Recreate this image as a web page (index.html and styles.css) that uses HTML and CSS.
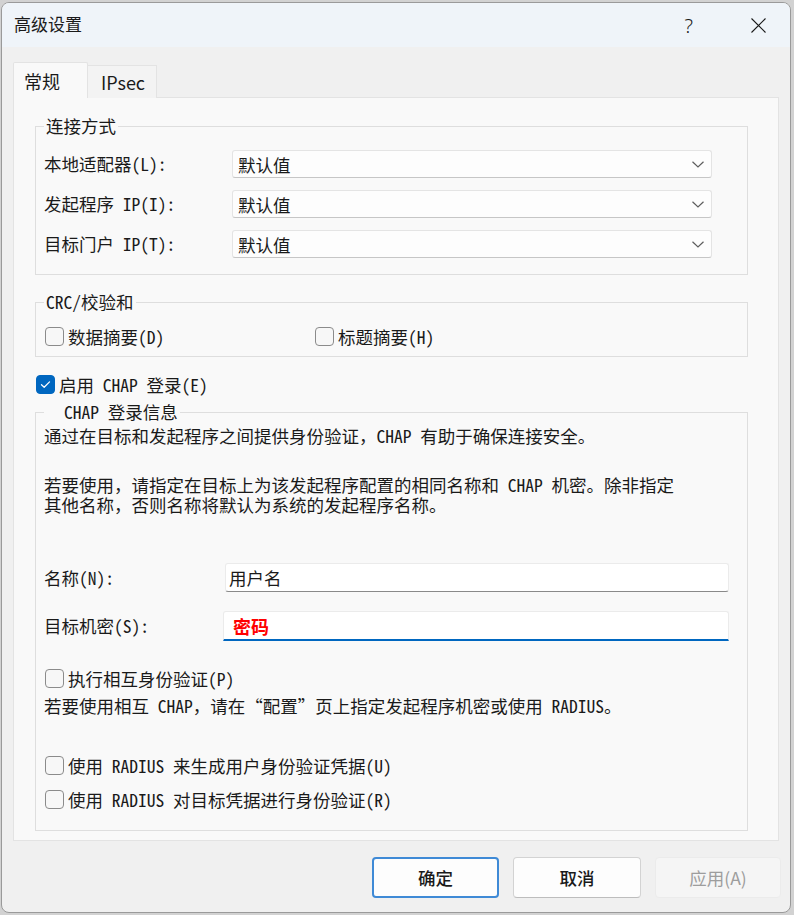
FILE: index.html
```html
<!DOCTYPE html>
<html lang="zh-CN">
  <head>
    <meta charset="UTF-8" />
    <meta name="viewport" content="width=device-width, initial-scale=1.0" />
    <title>高级设置</title>
    <link rel="stylesheet" href="styles.css">
  </head>
  <body>
    <div class="window">
      <div class="titlebar">
        <span class="title">高级设置</span>
        <span class="help">?</span>
        <svg class="close" viewBox="0 0 15 15" fill="none" stroke="#1a1a1a" stroke-width="1.1">
          <path d="M0.5 0.5L14.5 14.5M14.5 0.5L0.5 14.5"></path>
        </svg>
      </div>

      <div class="tabs">
        <div class="tab tab-active">常规</div>
        <div class="tab tab-ipsec">IPsec</div>
      </div>

      <div class="panel">
        <fieldset class="group group-conn">
          <legend>连接方式</legend>
          <div class="form-grid">
            <span class="label">本地适配器(L):</span>
            <div class="combo">
              <span>默认值</span>
              <svg class="chevron" viewBox="0 0 12 7" fill="none" stroke="#5f5f5f" stroke-width="1.2">
                <path d="M0.5 0.8L6 6L11.5 0.8"></path>
              </svg>
            </div>
            <span class="label">发起程序 IP(I):</span>
            <div class="combo">
              <span>默认值</span>
              <svg class="chevron" viewBox="0 0 12 7" fill="none" stroke="#5f5f5f" stroke-width="1.2">
                <path d="M0.5 0.8L6 6L11.5 0.8"></path>
              </svg>
            </div>
            <span class="label">目标门户 IP(T):</span>
            <div class="combo">
              <span>默认值</span>
              <svg class="chevron" viewBox="0 0 12 7" fill="none" stroke="#5f5f5f" stroke-width="1.2">
                <path d="M0.5 0.8L6 6L11.5 0.8"></path>
              </svg>
            </div>
          </div>
        </fieldset>

        <fieldset class="group group-crc">
          <legend>CRC/校验和</legend>
          <div class="check-row">
            <div class="check check-wide"><span class="box"></span>数据摘要(D)</div>
            <div class="check"><span class="box"></span>标题摘要(H)</div>
          </div>
        </fieldset>

        <div class="check check-chap">
          <span class="box box-on">
            <svg viewBox="0 0 19 19" fill="none" stroke="#ffffff" stroke-width="1.4" stroke-linecap="round" stroke-linejoin="round">
              <path d="M5 9.8L8 12.6L14 6.6"></path>
            </svg>
          </span>启用 CHAP 登录(E)
        </div>

        <fieldset class="group group-chap">
          <legend>CHAP 登录信息</legend>
          <p class="note">通过在目标和发起程序之间提供身份验证，CHAP 有助于确保连接安全。</p>
          <div class="note-tight">
            <p class="note-line">若要使用，请指定在目标上为该发起程序配置的相同名称和 CHAP 机密。除非指定</p>
            <p class="note-line">其他名称，否则名称将默认为系统的发起程序名称。</p>
          </div>

          <div class="field-row field-row-name">
            <span class="label">名称(N):</span>
            <div class="field">用户名</div>
          </div>
          <div class="field-row field-row-secret">
            <span class="label">目标机密(S):</span>
            <div class="field field-secret">密码</div>
          </div>

          <div class="check check-mutual"><span class="box"></span>执行相互身份验证(P)</div>
          <p class="note note-mutual">若要使用相互 CHAP，请在“配置”页上指定发起程序机密或使用 RADIUS。</p>

          <div class="check check-radius1"><span class="box"></span>使用 RADIUS 来生成用户身份验证凭据(U)</div>
          <div class="check check-radius2"><span class="box"></span>使用 RADIUS 对目标凭据进行身份验证(R)</div>
        </fieldset>
      </div>

      <div class="buttons">
        <div class="btn btn-default">确定</div>
        <div class="btn btn-cancel">取消</div>
        <div class="btn btn-disabled">应用(A)</div>
      </div>
    </div>
  </body>
</html>
```

FILE: styles.css
```css
body {
  margin: 0;
  background: #d2d2d2;
  font-family: "Noto Sans Mono CJK SC", "Noto Sans CJK SC", sans-serif;
  font-size: 17.5px;
  color: #1a1a1a;
}

.window {
  box-sizing: border-box;
  width: 790px;
  height: 911px;
  margin: 2px 0 0 1px;
  border: 1px solid #9a9a9a;
  border-radius: 8px;
  background: #f0f0f0;
  overflow: hidden;
}

.titlebar {
  height: 44px;
  background: #eff4f9;
  display: flex;
  align-items: center;
  padding-left: 12px;
}

.title {
  flex: 1;
  font-family: "Noto Sans CJK SC", sans-serif;
  font-size: 17px;
  line-height: 20px;
  margin-top: -2px;
}

.help {
  font-family: "Noto Sans", sans-serif;
  font-size: 20px;
  font-weight: 300;
  margin-right: 58px;
}

.close {
  width: 15px;
  height: 15px;
  margin-right: 24px;
}

/* tab strip */
.tabs {
  display: flex;
  align-items: flex-end;
  height: 36px;
  margin: 15px 0 -1px 11px;
}

.tab {
  box-sizing: border-box;
  height: 33px;
  display: flex;
  align-items: center;
  border: 1px solid #e3e3e3;
  border-bottom: none;
  background: #f3f3f3;
  font-family: "Noto Sans CJK SC", sans-serif;
  font-size: 18px;
}

.tab-active {
  position: relative;
  z-index: 1;
  width: 75px;
  height: 36px;
  padding-left: 10px;
  background: #f9f9f9;
  border-radius: 2px 2px 0 0;
}

.tab-ipsec {
  width: 69px;
  padding-left: 13px;
  border-left: none;
}

.panel {
  box-sizing: border-box;
  height: 744px;
  margin: 0 11px;
  padding: 16px 30px 0 21px;
  background: #f9f9f9;
  border: 1px solid #e3e3e3;
}

/* group boxes */
.group {
  margin: 0;
  padding: 0 0 0 8px;
  min-width: 0;
  border: 1px solid #dedede;
}

.group legend {
  padding: 0 2px;
  line-height: 24px;
}

.group-conn {
  padding-bottom: 16px;
}

.form-grid {
  display: grid;
  grid-template-columns: 188px 480px;
  row-gap: 12px;
  align-items: center;
  margin-top: 12px;
}

.label {
  line-height: 24px;
  white-space: nowrap;
}

.combo {
  box-sizing: border-box;
  height: 28px;
  display: flex;
  align-items: center;
  justify-content: space-between;
  padding: 0 7px 0 5px;
  background: #fdfdfd;
  border: 1px solid #e4e4e4;
  border-bottom-color: #c6c6c6;
  border-radius: 3px;
}

.chevron {
  width: 12px;
  height: 7px;
}

.group-crc {
  margin-top: 15px;
  padding-bottom: 8px;
}

.check-row {
  display: flex;
  margin-top: 10px;
}

.check {
  display: flex;
  align-items: center;
  gap: 4px;
  height: 24px;
  white-space: nowrap;
}

.check-wide {
  width: 270px;
}

.box {
  box-sizing: border-box;
  width: 19px;
  height: 19px;
  margin-left: 1px;
  border: 1px solid #8b8b8b;
  border-radius: 4px;
  background: #f7f7f7;
}

.box-on {
  background: #0067c0;
  border-color: #0067c0;
}

.box-on svg {
  display: block;
  width: 17px;
  height: 17px;
}

.check-chap {
  margin-top: 15px;
}

/* CHAP group */
.group-chap {
  margin-top: 4px;
  padding-bottom: 19px;
}

.group-chap legend {
  padding-left: 20px;
}

.note {
  margin: 0;
  line-height: 24px;
  white-space: nowrap;
}

.note-tight {
  margin-top: 27px;
}

.note-line {
  margin: 0;
  line-height: 20px;
  white-space: nowrap;
}

.field-row {
  display: grid;
  grid-template-columns: 181px 504px;
  align-items: center;
}

.field-row-name {
  margin-top: 48px;
}

.field-row-secret {
  margin-top: 19px;
}

.field {
  box-sizing: border-box;
  height: 29px;
  display: flex;
  align-items: center;
  padding-left: 3px;
  background: #ffffff;
  border: 1px solid #ebebeb;
  border-bottom-color: #8a8a8a;
  border-radius: 3px;
}

.field-secret {
  width: 506px;
  height: 30px;
  margin-left: -2px;
  padding-left: 9px;
  border-bottom: 2px solid #0067c0;
  border-radius: 3px 3px 0 0;
  color: #ff0000;
  font-family: "Noto Sans CJK SC", sans-serif;
  font-weight: 700;
  font-size: 18px;
}

.check-mutual {
  margin-top: 25px;
}

.note-mutual {
  margin-top: 4px;
}

.check-radius1 {
  margin-top: 35px;
}

.check-radius2 {
  margin-top: 10px;
}

/* dialog buttons */
.buttons {
  display: flex;
  justify-content: flex-end;
  gap: 14px;
  margin-top: 16px;
  padding-right: 9px;
}

.btn {
  box-sizing: border-box;
  width: 127px;
  height: 41px;
  display: flex;
  align-items: center;
  justify-content: center;
  background: #fdfdfd;
  border: 1px solid #d3d3d3;
  border-bottom-color: #bdbdbd;
  border-radius: 4px;
  font-family: "Noto Sans CJK SC", sans-serif;
  font-size: 17.5px;
  font-weight: 500;
}

.btn-default {
  border: 2px solid #3f8ad6;
}

.btn-cancel {
  width: 128px;
}

.btn-disabled {
  width: 126px;
  background: #f5f5f5;
  border-color: #ebebeb;
  color: #9d9d9d;
  font-weight: 400;
}
```
